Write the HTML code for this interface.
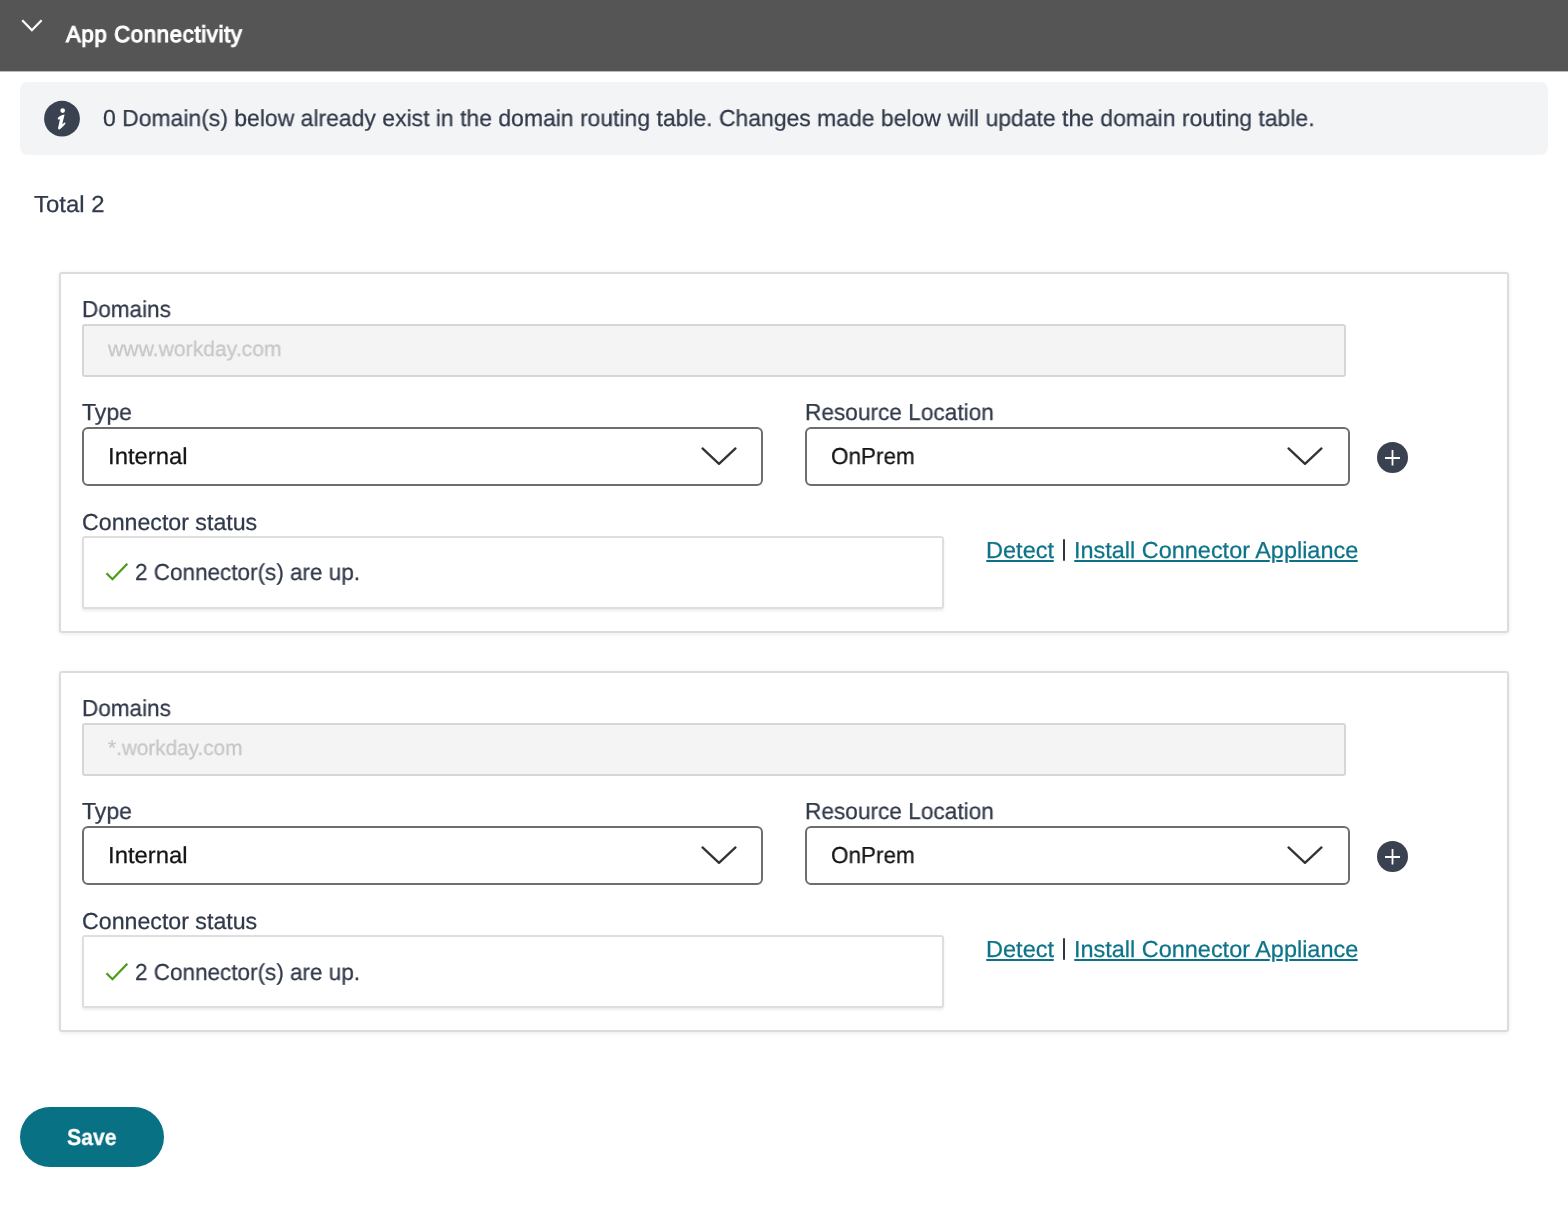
<!DOCTYPE html>
<html>
<head>
<meta charset="utf-8">
<style>
html,body{margin:0;padding:0;background:#fff;width:1568px;height:1208px;overflow:hidden;position:relative;font-family:"Liberation Sans",sans-serif;}
.abs{position:absolute;}
.t{position:absolute;white-space:nowrap;line-height:0;height:0;transform-origin:0 0;will-change:transform;text-rendering:geometricPrecision;-webkit-text-stroke:0.25px currentColor;}
.bl{display:inline-block;width:0;height:0;}
.hdr{left:0;top:0;width:1568px;height:71px;background:#555555;}
.info{left:20px;top:82px;width:1528px;height:73px;background:#f3f4f6;border-radius:8px;}
.card{left:59px;width:1446px;height:357px;border:2px solid #dcdcdc;border-radius:3px;box-shadow:0 1px 4px rgba(0,0,0,0.08);background:#fff;}
.dom{left:82px;width:1260px;height:49px;background:#f4f4f4;border:2px solid #d6d6d6;border-radius:3px;}
.sel{height:55.5px;border:2px solid #6e6e6e;border-radius:6px;background:#fff;}
.stat{left:82px;width:858px;height:69px;border:2px solid #dedede;border-radius:3px;box-shadow:0 2px 3px rgba(0,0,0,0.08);background:#fff;}
.ul{height:2px;background:#0b7186;border-radius:1px;}
</style>
</head>
<body>
<div class="abs hdr"></div>
<div class="abs" style="left:0;top:71px;width:1568px;height:1px;background:rgba(85,85,85,0.4)"></div>
<svg class="abs" style="left:10px;top:10px" width="44" height="30" viewBox="0 0 44 30"><polyline points="12.2,10.2 21.9,20.2 31.6,10.2" fill="none" stroke="#fff" stroke-width="2.3"/></svg>
<div class="t" style="left:65.60px;top:34.01px;font-size:22.97px;color:#fff;transform:scaleX(0.9625);-webkit-text-stroke:1.1px #fff;letter-spacing:0.7px;">App Connectivity</div>
<div class="abs info"></div>
<svg class="abs" style="left:42px;top:98px" width="40" height="40" viewBox="0 0 40 40"><circle cx="20" cy="20.7" r="17.9" fill="#3a4150"/><circle cx="20.7" cy="12.6" r="2.3" fill="#fff"/><path d="M15.6 20.2 C17.4 18.3 19.6 16.8 22.6 16.5 L20.3 26.1 C21.3 25.5 22.2 24.9 23.1 24.3 L23.5 25.6 C21.9 28.0 19.8 30.0 17.4 31.4 C16.3 31.6 15.9 30.8 16.1 29.8 L18.0 21.2 C17.5 21.2 17.0 21.4 16.5 21.7 Z" fill="#fff"/></svg>
<div class="t" style="left:103.20px;top:118.30px;font-size:23.11px;color:#313a4a;transform:scaleX(0.9928);">0 Domain(s) below already exist in the domain routing table. Changes made below will update the domain routing table.</div>
<div class="t" style="left:34.40px;top:204.41px;font-size:23.11px;color:#313a4a;transform:scaleX(1.0351);">Total 2</div>
<div class="abs card" style="top:272px"></div>
<div class="t" style="left:81.90px;top:309.20px;font-size:23.11px;color:#313a4a;transform:scaleX(0.9737);">Domains</div>
<div class="abs dom" style="top:323.5px"></div>
<div class="t" style="left:108.44px;top:350.41px;font-size:21.22px;color:#c6c6c6;transform:scaleX(0.9967);">www.workday.com</div>
<div class="t" style="left:81.70px;top:412.30px;font-size:23.11px;color:#313a4a;transform:scaleX(0.9955);">Type</div>
<div class="abs sel" style="left:82px;top:426.5px;width:677px;"></div>
<div class="t" style="left:108.20px;top:456.30px;font-size:23.11px;color:#141414;transform:scaleX(1.0320);">Internal</div>
<svg class="abs" style="left:698px;top:440px" width="42" height="30" viewBox="0 0 42 30"><polyline points="4.5,8.45 21,23.9 37.5,8.45" fill="none" stroke="#333" stroke-width="2.3" stroke-linecap="round" stroke-linejoin="round"/></svg>
<div class="t" style="left:805.20px;top:412.20px;font-size:23.11px;color:#313a4a;transform:scaleX(0.9801);">Resource Location</div>
<div class="abs sel" style="left:805px;top:426.5px;width:541px;"></div>
<div class="t" style="left:830.60px;top:456.30px;font-size:23.11px;color:#141414;transform:scaleX(0.9728);">OnPrem</div>
<svg class="abs" style="left:1284px;top:440px" width="42" height="30" viewBox="0 0 42 30"><polyline points="4.5,8.45 21,23.9 37.5,8.45" fill="none" stroke="#333" stroke-width="2.3" stroke-linecap="round" stroke-linejoin="round"/></svg>
<svg class="abs" style="left:1377px;top:442px" width="31" height="31" viewBox="0 0 31 31"><circle cx="15.5" cy="15.5" r="15.5" fill="#3a4150"/><path d="M15.5 8 V23.5 M8 16 H23" stroke="#fff" stroke-width="1.8"/></svg>
<div class="t" style="left:82.40px;top:521.50px;font-size:23.11px;color:#313a4a;transform:scaleX(1.0029);">Connector status</div>
<div class="abs stat" style="top:536px"></div>
<svg class="abs" style="left:100px;top:556px" width="35" height="32" viewBox="0 0 35 32"><polyline points="6.5,17.3 12.45,23.2 27.3,7.7" fill="none" stroke="#4c9c1a" stroke-width="2.3"/></svg>
<div class="t" style="left:134.60px;top:572.00px;font-size:23.11px;color:#313a4a;transform:scaleX(0.9733);">2 Connector(s) are up.</div>
<div class="t" style="left:985.90px;top:549.50px;font-size:23.11px;color:#0e7489;transform:scaleX(1.0186);">Detect</div>
<div class="abs" style="left:1063px;top:539px;width:2px;height:22px;border-radius:1px;background:#2f3542;"></div>
<div class="t" style="left:1073.80px;top:549.50px;font-size:23.11px;color:#0e7489;transform:scaleX(1.0148);">Install Connector Appliance</div>
<div class="abs ul" style="left:986px;top:559.5px;width:67.7px;"></div>
<div class="abs ul" style="left:1074px;top:559.5px;width:195.6px;"></div>
<div class="abs ul" style="left:1275.6px;top:559.5px;width:7.0px;"></div>
<div class="abs ul" style="left:1288.6px;top:559.5px;width:69.4px;"></div>
<div class="abs card" style="top:671px"></div>
<div class="t" style="left:81.90px;top:708.20px;font-size:23.11px;color:#313a4a;transform:scaleX(0.9737);">Domains</div>
<div class="abs dom" style="top:722.5px"></div>
<div class="t" style="left:108.30px;top:749.41px;font-size:21.22px;color:#c6c6c6;transform:scaleX(0.9770);">*.workday.com</div>
<div class="t" style="left:81.70px;top:811.30px;font-size:23.11px;color:#313a4a;transform:scaleX(0.9955);">Type</div>
<div class="abs sel" style="left:82px;top:825.5px;width:677px;"></div>
<div class="t" style="left:108.20px;top:855.30px;font-size:23.11px;color:#141414;transform:scaleX(1.0320);">Internal</div>
<svg class="abs" style="left:698px;top:839px" width="42" height="30" viewBox="0 0 42 30"><polyline points="4.5,8.45 21,23.9 37.5,8.45" fill="none" stroke="#333" stroke-width="2.3" stroke-linecap="round" stroke-linejoin="round"/></svg>
<div class="t" style="left:805.20px;top:811.20px;font-size:23.11px;color:#313a4a;transform:scaleX(0.9801);">Resource Location</div>
<div class="abs sel" style="left:805px;top:825.5px;width:541px;"></div>
<div class="t" style="left:830.60px;top:855.30px;font-size:23.11px;color:#141414;transform:scaleX(0.9728);">OnPrem</div>
<svg class="abs" style="left:1284px;top:839px" width="42" height="30" viewBox="0 0 42 30"><polyline points="4.5,8.45 21,23.9 37.5,8.45" fill="none" stroke="#333" stroke-width="2.3" stroke-linecap="round" stroke-linejoin="round"/></svg>
<svg class="abs" style="left:1377px;top:841px" width="31" height="31" viewBox="0 0 31 31"><circle cx="15.5" cy="15.5" r="15.5" fill="#3a4150"/><path d="M15.5 8 V23.5 M8 16 H23" stroke="#fff" stroke-width="1.8"/></svg>
<div class="t" style="left:82.40px;top:920.50px;font-size:23.11px;color:#313a4a;transform:scaleX(1.0029);">Connector status</div>
<div class="abs stat" style="top:935px"></div>
<svg class="abs" style="left:100px;top:955.5px" width="35" height="32" viewBox="0 0 35 32"><polyline points="6.5,17.3 12.45,23.2 27.3,7.7" fill="none" stroke="#4c9c1a" stroke-width="2.3"/></svg>
<div class="t" style="left:134.60px;top:972.00px;font-size:23.11px;color:#313a4a;transform:scaleX(0.9733);">2 Connector(s) are up.</div>
<div class="t" style="left:985.90px;top:948.50px;font-size:23.11px;color:#0e7489;transform:scaleX(1.0186);">Detect</div>
<div class="abs" style="left:1063px;top:938px;width:2px;height:22px;border-radius:1px;background:#2f3542;"></div>
<div class="t" style="left:1073.80px;top:948.50px;font-size:23.11px;color:#0e7489;transform:scaleX(1.0148);">Install Connector Appliance</div>
<div class="abs ul" style="left:986px;top:958.5px;width:67.7px;"></div>
<div class="abs ul" style="left:1074px;top:958.5px;width:195.6px;"></div>
<div class="abs ul" style="left:1275.6px;top:958.5px;width:7.0px;"></div>
<div class="abs ul" style="left:1288.6px;top:958.5px;width:69.4px;"></div>
<div class="abs" style="left:20px;top:1107px;width:144px;height:60px;border-radius:30px;background:#087284;"></div>
<div class="t" style="left:67.40px;top:1137.20px;font-size:22.97px;font-weight:bold;color:#fff;transform:scaleX(0.9256);">Save</div>
</body>
</html>
